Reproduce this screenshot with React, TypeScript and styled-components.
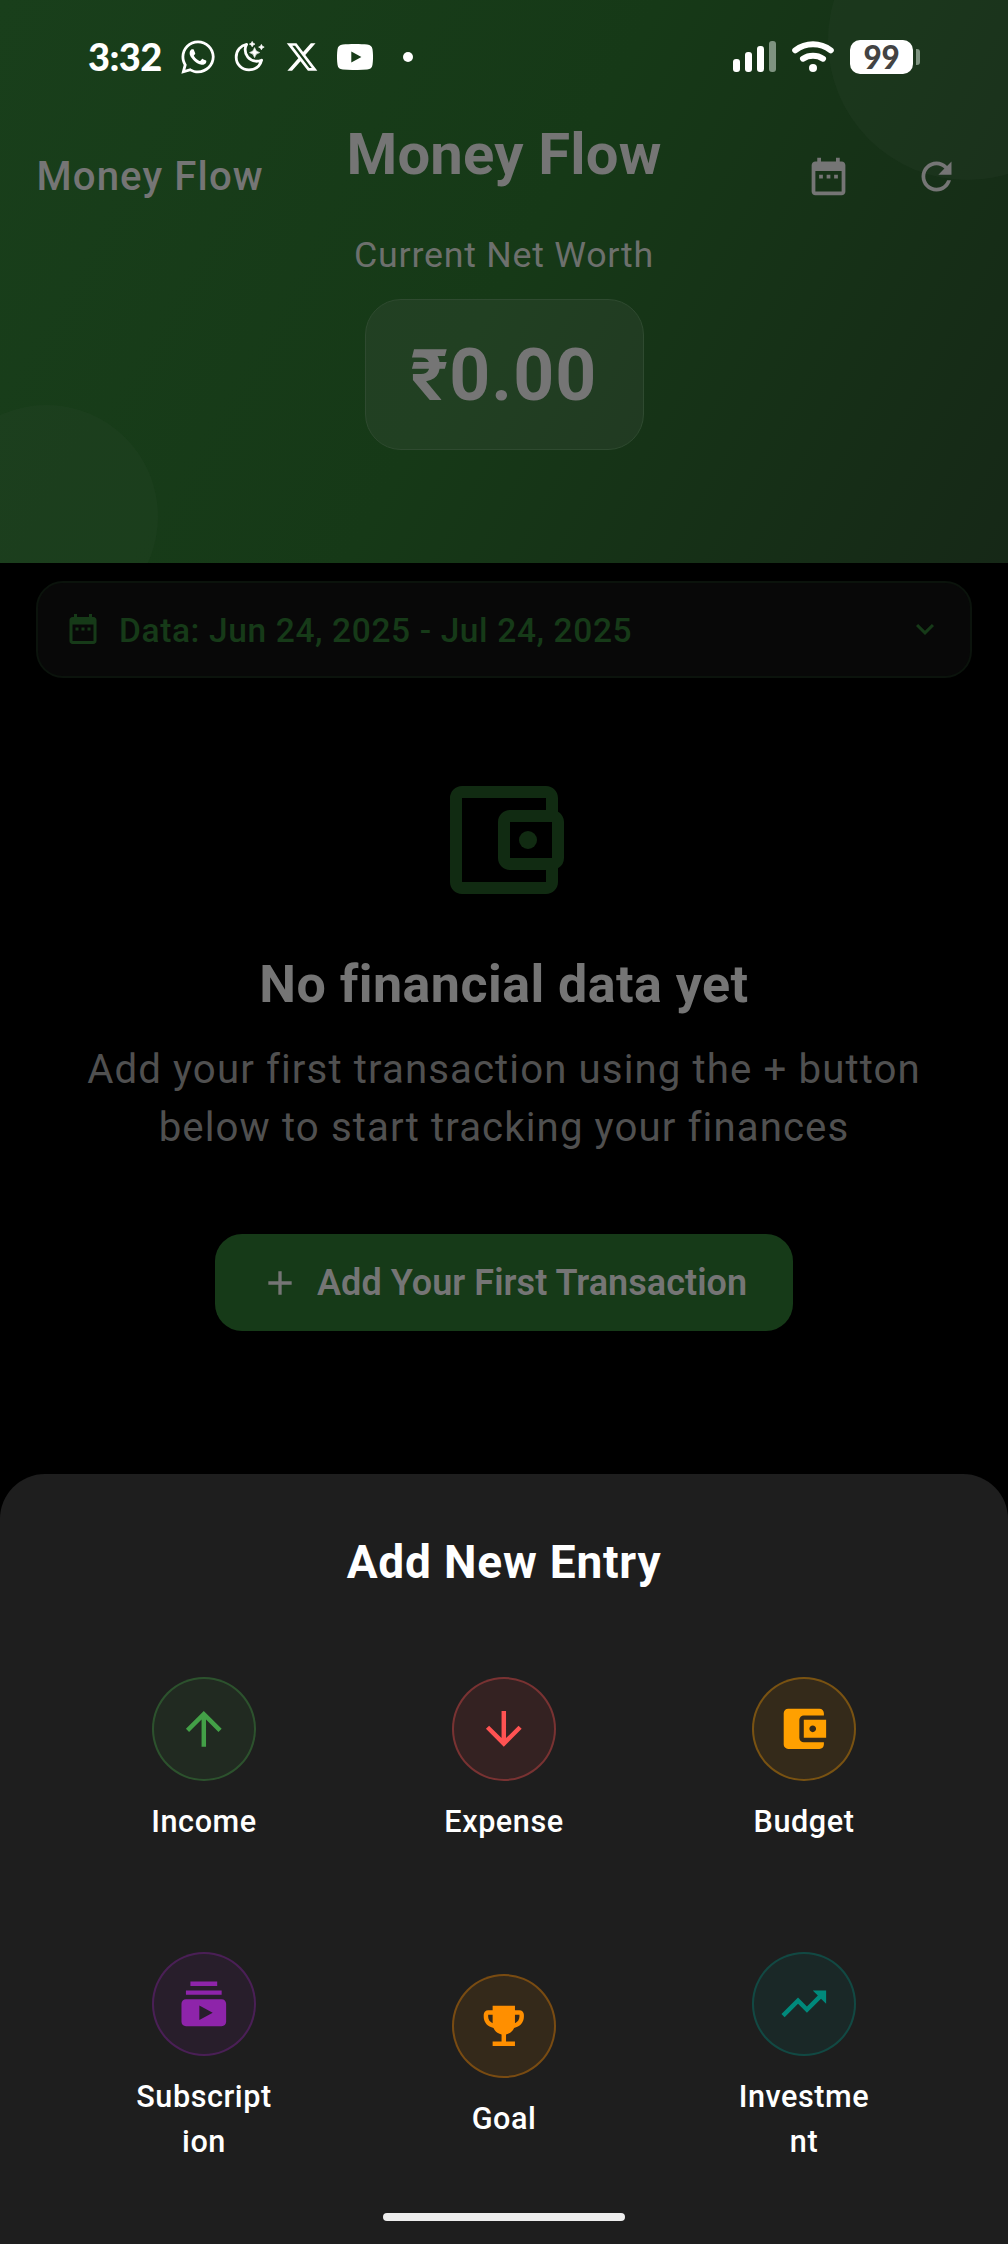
import React from "react";
import styled, { createGlobalStyle } from "styled-components";
import { FaWhatsapp, FaXTwitter } from "react-icons/fa6";

const GlobalStyle = createGlobalStyle`
  * { box-sizing: border-box; }
  body { margin: 0; background: #000; }
`;

const Screen = styled.div`
  width: 1008px;
  height: 2244px;
  display: flex;
  flex-direction: column;
  overflow: hidden;
  background: #000;
  color: #757575;
  font-family: Roboto, "Liberation Sans", sans-serif;
`;

/* ---------- header ---------- */

const Header = styled.header`
  position: relative;
  flex: none;
  height: 562.7px;
  display: grid;
  grid-template: "stack" 1fr / 1fr;
  align-items: start;
  overflow: hidden;
  background: linear-gradient(119.2deg, #193f1b 0%, #163917 50%, #162817 100%);
  & > * { grid-area: stack; }
`;

const Bubble = styled.div<{ $size: number; $x: number; $y: number; $alpha: number }>`
  position: absolute;
  left: ${(p) => p.$x}px;
  top: ${(p) => p.$y}px;
  width: ${(p) => p.$size}px;
  height: ${(p) => p.$size}px;
  border-radius: 50%;
  background: rgba(117, 117, 117, ${(p) => p.$alpha});
`;

const StatusBar = styled.div`
  position: relative;
  display: flex;
  justify-content: space-between;
  align-items: center;
  height: 114px;
  padding: 0 88px 0 88px;
  color: #fff;
`;

const StatusGroup = styled.div`
  display: flex;
  align-items: center;
`;

const Clock = styled.span`
  width: 91px;
  padding-bottom: 3px;
  font: 900 38px/40px Lato, sans-serif;
  letter-spacing: -0.6px;
`;

const StatusIcon = styled.span<{ $gap?: number }>`
  display: flex;
  margin-right: ${(p) => p.$gap ?? 0}px;
`;

const Battery = styled.span`
  display: flex;
  align-items: center;
  justify-content: center;
  width: 63px;
  height: 34px;
  margin: 0 3px 0 16px;
  border-radius: 10px;
  background: #fff;
  color: #434343;
  font: 900 31.5px/34px Lato, sans-serif;
  letter-spacing: -0.3px;
`;

const BatteryTip = styled.span`
  width: 4px;
  height: 16px;
  border-radius: 0 3px 3px 0;
  background: #7e9380;
`;

const AppBar = styled.div`
  position: relative;
  display: flex;
  align-items: center;
  height: 126px;
  margin-top: 113.5px;
  padding: 0 18px 0 36.5px;
`;

const AppBarTitle = styled.div`
  flex: 1;
  font-size: 40.2px;
  font-weight: 500;
  line-height: 48px;
  letter-spacing: 1.1px;
`;

const IconButton = styled.button`
  display: flex;
  align-items: center;
  justify-content: center;
  width: 108px;
  height: 108px;
  padding: 0;
  border: 0;
  background: none;
  color: inherit;
`;

const Hero = styled.div`
  position: relative;
  display: flex;
  flex-direction: column;
  align-items: center;
  padding-top: 120px;
`;

const HeroTitle = styled.h1`
  margin: 0;
  font-size: 58px;
  font-weight: 700;
  line-height: 68px;
  letter-spacing: 0.2px;
`;

const HeroLabel = styled.div`
  margin-top: 46.4px;
  font-size: 35.75px;
  line-height: 42px;
  letter-spacing: 0.75px;
  color: #6d706d;
`;

const AmountCard = styled.div`
  display: flex;
  align-items: center;
  justify-content: center;
  width: 279px;
  height: 151px;
  margin-top: 22.4px;
  padding-top: 4px;
  border: 1px solid #2f4a30;
  border-radius: 36px;
  background: rgba(117, 117, 117, 0.12);
  font-size: 71.5px;
  font-weight: 700;
  line-height: 84px;
  letter-spacing: 1.1px;
`;

/* ---------- content ---------- */

const FilterBar = styled.div`
  flex: none;
  display: flex;
  align-items: center;
  height: 97px;
  margin: 18.3px 36px 0;
  padding: 0 27px;
  border: 2px solid #0b130c;
  border-radius: 27px;
  background: #080808;
  color: #163a18;
`;

const FilterText = styled.span`
  flex: 1;
  margin-left: 18px;
  padding-top: 3px;
  font-size: 33.5px;
  font-weight: 500;
  line-height: 40px;
  letter-spacing: 0.62px;
`;

const EmptyState = styled.section`
  flex: 1;
  display: flex;
  flex-direction: column;
  align-items: center;
  padding-top: 90px;
  text-align: center;
`;

const WalletBadge = styled.div`
  display: flex;
  color: #112b12;
`;

const EmptyTitle = styled.h2`
  margin: 41px 0 0;
  font-size: 52px;
  font-weight: 700;
  line-height: 64px;
  letter-spacing: 0.45px;
`;

const EmptyText = styled.p`
  margin: 24px 0 0;
  font-size: 40.2px;
  line-height: 57.6px;
  letter-spacing: 1.1px;
  color: #505050;
`;

const PrimaryButton = styled.button`
  display: flex;
  align-items: center;
  width: 578px;
  height: 97px;
  margin-top: 78.2px;
  padding: 0 0 0 45px;
  border: 0;
  border-radius: 27px;
  background: #163a18;
  color: #757575;
  font: 600 36px/42px Roboto, sans-serif;
`;

const ButtonText = styled.span`
  margin-left: 17px;
  letter-spacing: 0.05px;
  white-space: nowrap;
`;

/* ---------- bottom sheet ---------- */

const Sheet = styled.section`
  flex: none;
  display: flex;
  flex-direction: column;
  align-items: center;
  height: 770px;
  padding-top: 61px;
  border-radius: 45px 45px 0 0;
  background: #1e1e1e;
  color: #fff;
`;

const SheetTitle = styled.h2`
  margin: 0;
  font-size: 46px;
  font-weight: 700;
  line-height: 54px;
  letter-spacing: 0.8px;
`;

const EntryGrid = styled.div`
  display: grid;
  grid-template-columns: repeat(3, 300px);
  grid-auto-rows: 297.2px;
  margin-top: 23px;
`;

const Entry = styled.div`
  display: flex;
  flex-direction: column;
  align-items: center;
  justify-content: center;
`;

const EntryIcon = styled.div<{ $rgb: string }>`
  display: flex;
  align-items: center;
  justify-content: center;
  width: 104px;
  height: 104px;
  border: 2px solid rgba(${(p) => p.$rgb}, 0.34);
  border-radius: 50%;
  background: rgba(${(p) => p.$rgb}, 0.1);
  color: rgb(${(p) => p.$rgb});
`;

const EntryLabel = styled.div`
  width: 141px;
  margin-top: 18px;
  font-size: 30.6px;
  font-weight: 500;
  line-height: 45.2px;
  letter-spacing: 0.55px;
  text-align: center;
  word-break: break-all;
`;

const HomeIndicator = styled.div`
  width: 242px;
  height: 8px;
  margin-top: 7px;
  border-radius: 4px;
  background: #eee;
`;

/* ---------- icons ---------- */

const Glyph = ({ d, size, children }: { d: string; size: number; children?: React.ReactNode }) => (
  <svg width={size} height={size} viewBox="0 0 24 24" fill="currentColor">
    <path d={d} />
    {children}
  </svg>
);

const ICONS = {
  dateRange:
    "M9 11H7v2h2v-2zm4 0h-2v2h2v-2zm4 0h-2v2h2v-2zm2-7h-1V2h-2v2H8V2H6v2H5c-1.11 0-1.99.9-1.99 2L3 20c0 1.1.89 2 2 2h14c1.1 0 2-.9 2-2V6c0-1.1-.9-2-2-2zm0 16H5V9h14v11z",
  refresh:
    "M17.65 6.35C16.2 4.9 14.21 4 12 4c-4.42 0-7.99 3.58-7.99 8s3.57 8 7.99 8c3.73 0 6.84-2.55 7.73-6h-2.08c-.82 2.33-3.04 4-5.65 4-3.31 0-6-2.69-6-6s2.69-6 6-6c1.66 0 3.14.69 4.22 1.78L13 11h7V4l-2.35 2.35z",
  arrowDown: "M7.41 8.59L12 13.17l4.59-4.58L18 10l-6 6-6-6 1.41-1.41z",
  walletOutlined:
    "M21 7.28V5c0-1.1-.9-2-2-2H5a2 2 0 0 0-2 2v14c0 1.1.89 2 2 2h14c1.1 0 2-.9 2-2v-2.28A2 2 0 0 0 22 15V9c0-.74-.4-1.38-1-1.72zM20 9v6h-7V9h7zM5 19V5h14v2h-6c-1.1 0-2 .9-2 2v6c0 1.1.9 2 2 2h6v2H5z",
  add: "M19 13h-6v6h-2v-6H5v-2h6V5h2v6h6v2z",
  arrowUpward: "M4 12l1.41 1.41L11 7.83V20h2V7.83l5.58 5.59L20 12l-8-8-8 8z",
  arrowDownward: "M20 12l-1.41-1.41L13 16.17V4h-2v12.17l-5.58-5.59L4 12l8 8 8-8z",
  wallet:
    "M21 18v1c0 1.1-.9 2-2 2H5a2 2 0 0 1-2-2V5a2 2 0 0 1 2-2h14c1.1 0 2 .9 2 2v1h-9a2 2 0 0 0-2 2v8a2 2 0 0 0 2 2h9zm-9-2h10V8H12v8zm4-2.5c-.83 0-1.5-.67-1.5-1.5s.67-1.5 1.5-1.5 1.5.67 1.5 1.5-.67 1.5-1.5 1.5z",
  subscriptions:
    "M20 8H4V6h16v2zm-2-6H6v2h12V2zm4 10v8c0 1.1-.9 2-2 2H4c-1.1 0-2-.9-2-2v-8c0-1.1.9-2 2-2h16c1.1 0 2 .9 2 2zm-6 4l-6-3.27v6.53L16 16z",
  trophy:
    "M19 5h-2V3H7v2H5c-1.1 0-2 .9-2 2v1c0 2.55 1.92 4.63 4.39 4.94.63 1.5 1.98 2.63 3.61 2.96V19H7v2h10v-2h-4v-3.1c1.63-.33 2.98-1.46 3.61-2.96C19.08 12.63 21 10.55 21 8V7c0-1.1-.9-2-2-2zM5 8V7h2v3.82C5.84 10.4 5 9.3 5 8zm14 0c0 1.3-.84 2.4-2 2.82V7h2v1z",
  trendingUp: "M16 6l2.29 2.29-4.88 4.88-4-4L2 16.59 3.41 18l6-6 4 4 6.3-6.29L22 12V6z",
};

const MoonIcon = () => (
  <svg width="32" height="32" viewBox="0 0 32 32" fill="none">
    <path
      d="M12.6 3.4C6.800 4.600 2.200 9.300 2.200 16.200c0 7.200 5.700 12.600 12.800 12.600 6.300 0 11-3.600 12.600-9.600-2.200.9-3.900 1.200-6 1-6.500-.8-10.800-5.800-10.400-12.300.1-1.700.6-3.200 1.400-4.500z"
      stroke="#fff" strokeWidth="2.800" strokeLinejoin="round"
    />
    <path d="M20.600 6.600q.8 4.400 5 5-4.200.7-5 5-.8-4.300-5-5 4.200-.6 5-5zM18.200.4q.5 2.400 2.800 2.700-2.300.4-2.800 2.700-.5-2.300-2.800-2.700 2.300-.3 2.800-2.700zM27.400 3.400q.5 2.400 2.800 2.700-2.300.4-2.800 2.700-.5-2.300-2.800-2.700 2.300-.3 2.800-2.700z" fill="#fff" stroke="#fff" strokeWidth="0.700" />
  </svg>
);

const YoutubeIcon = () => (
  <svg width="36" height="26" viewBox="0 0 36 26">
    <path
      fillRule="evenodd"
      fill="#fff"
      d="M18 0c5 0 9 .2 12.200.5 3.200.3 4.900 1.800 5.300 4.800.7 5 .7 10.400 0 15.400-.4 3-2.100 4.500-5.300 4.800-7.800.7-16.600.7-24.400 0-3.200-.3-4.900-1.800-5.300-4.800-.7-5-.7-10.400 0-15.400C.9 2.300 2.600.8 5.800.5 9 .2 13 0 18 0zM14.300 7.600v10.800L24.400 13z"
    />
  </svg>
);

const SignalIcon = () => (
  <svg width="43" height="32" viewBox="0 0 43 32" fill="#fff">
    <rect x="0" y="18" width="7" height="13" rx="3" />
    <rect x="12" y="11" width="7" height="20" rx="3" />
    <rect x="24" y="5" width="7" height="26" rx="3" />
    <rect x="36" y="0" width="7" height="31" rx="3" fill="#7e9380" />
  </svg>
);

const WifiIcon = () => (
  <svg width="42" height="32" viewBox="0 0 42 32" fill="none" stroke="#fff" strokeWidth="6" strokeLinecap="round">
    <path d="M3.200 9.300C14 1.300 28 1.300 38.800 9.300" />
    <path d="M11 17.700C17 13.800 25 13.800 31 17.700" />
    <circle cx="21" cy="27" r="4" fill="#fff" stroke="none" />
  </svg>
);

const DotIcon = () => (
  <svg width="10" height="10" viewBox="0 0 10 10">
    <circle cx="5" cy="5" r="5" fill="#fff" />
  </svg>
);

const ENTRIES = [
  { label: "Income", rgb: "67, 160, 71", icon: ICONS.arrowUpward },
  { label: "Expense", rgb: "255, 82, 82", icon: ICONS.arrowDownward },
  { label: "Budget", rgb: "255, 160, 0", icon: ICONS.wallet },
  { label: "Subscription", rgb: "142, 36, 170", icon: ICONS.subscriptions },
  { label: "Goal", rgb: "255, 143, 0", icon: ICONS.trophy },
  { label: "Investment", rgb: "0, 137, 123", icon: ICONS.trendingUp },
];

export default function App() {
  return (
    <>
      <GlobalStyle />
      <Screen>
        <Header>
          <Bubble $size={279.4} $x={828} $y={-99.3} $alpha={0.06} />
          <Bubble $size={223.4} $x={-65.5} $y={405} $alpha={0.05} />
          <StatusBar>
            <StatusGroup>
              <Clock>3:32</Clock>
              <StatusIcon $gap={17}><FaWhatsapp size={38} /></StatusIcon>
              <StatusIcon $gap={19}><MoonIcon /></StatusIcon>
              <StatusIcon $gap={18}><FaXTwitter size={34} /></StatusIcon>
              <StatusIcon $gap={30}><YoutubeIcon /></StatusIcon>
              <DotIcon />
            </StatusGroup>
            <StatusGroup>
              <StatusIcon $gap={16}><SignalIcon /></StatusIcon>
              <WifiIcon />
              <Battery>99</Battery>
              <BatteryTip />
            </StatusGroup>
          </StatusBar>
          <AppBar>
            <AppBarTitle>Money Flow</AppBarTitle>
            <IconButton aria-label="Date range"><Glyph d={ICONS.dateRange} size={45} /></IconButton>
            <IconButton aria-label="Refresh"><Glyph d={ICONS.refresh} size={45} /></IconButton>
          </AppBar>
          <Hero>
            <HeroTitle>Money Flow</HeroTitle>
            <HeroLabel>Current Net Worth</HeroLabel>
            <AmountCard>₹0.00</AmountCard>
          </Hero>
        </Header>

        <FilterBar>
          <Glyph d={ICONS.dateRange} size={36} />
          <FilterText>Data: Jun 24, 2025 - Jul 24, 2025</FilterText>
          <Glyph d={ICONS.arrowDown} size={36} />
        </FilterBar>

        <EmptyState>
          <WalletBadge>
            <Glyph d={ICONS.walletOutlined} size={144}>
              <circle cx="16" cy="12" r="1.5" />
            </Glyph>
          </WalletBadge>
          <EmptyTitle>No financial data yet</EmptyTitle>
          <EmptyText>
            Add your first transaction using the + button
            <br />
            below to start tracking your finances
          </EmptyText>
          <PrimaryButton>
            <Glyph d={ICONS.add} size={40} />
            <ButtonText>Add Your First Transaction</ButtonText>
          </PrimaryButton>
        </EmptyState>

        <Sheet>
          <SheetTitle>Add New Entry</SheetTitle>
          <EntryGrid>
            {ENTRIES.map((e) => (
              <Entry key={e.label}>
                <EntryIcon $rgb={e.rgb}>
                  <Glyph d={e.icon} size={53.6} />
                </EntryIcon>
                <EntryLabel>{e.label}</EntryLabel>
              </Entry>
            ))}
          </EntryGrid>
          <HomeIndicator />
        </Sheet>
      </Screen>
    </>
  );
}
